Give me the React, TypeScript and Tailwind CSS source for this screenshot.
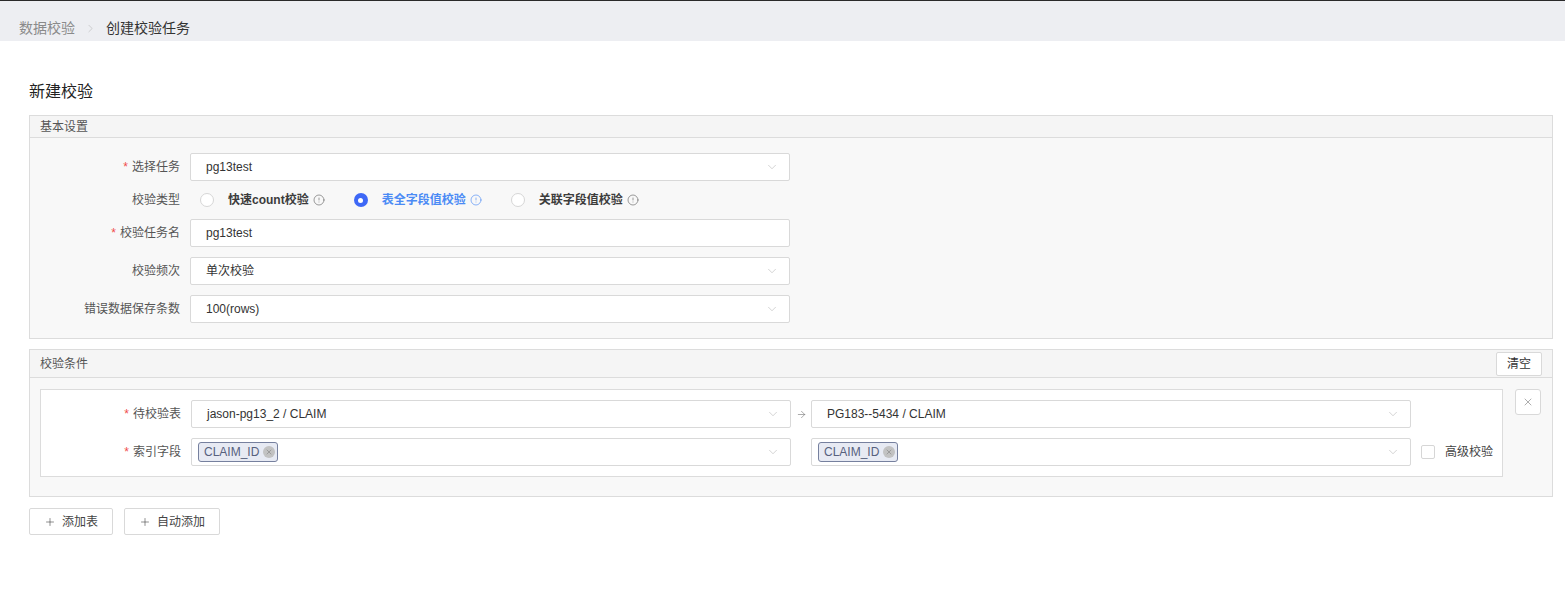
import { ChevronDown, ChevronRight, CircleAlert, Plus, X, ArrowRight } from 'lucide-react';

const font = { fontFamily: '"Liberation Sans", "Noto Sans CJK SC", sans-serif' };

function Label({ text, required, width }: { text: string; required?: boolean; width: string }) {
  return (
    <div className={`${width} mr-[10px] shrink-0 text-right text-[12px] whitespace-nowrap text-[#555]`}>
      {required && <span className="mr-[4px] text-[#f04c4c]">*</span>}
      {text}
    </div>
  );
}

function Select({ value, arrow = true, children }: { value?: string; arrow?: boolean; children?: React.ReactNode }) {
  return (
    <div className="flex h-[28px] w-[600px] shrink-0 items-center rounded-[2px] border border-[#d9d9d9] bg-white pr-[10px] pl-[15px] text-[12px] text-[#333]">
      <div className="flex flex-1 items-center">{children ?? value}</div>
      {arrow && <ChevronDown size={14} strokeWidth={1} className="text-[#b5b5b5]" />}
    </div>
  );
}

function Radio({ label, checked }: { label: string; checked?: boolean }) {
  return (
    <div className="mr-[29px] flex items-center">
      {checked ? (
        <span className="flex h-[14px] w-[14px] items-center justify-center rounded-full bg-[#3e68f6]">
          <span className="h-[5px] w-[5px] rounded-full bg-white" />
        </span>
      ) : (
        <span className="h-[14px] w-[14px] rounded-full border border-[#d6d6d6] bg-white" />
      )}
      <span className={`ml-[14px] text-[12px] font-semibold whitespace-nowrap ${checked ? 'text-[#4b8bf5]' : 'text-[#3c3c3c]'}`}>{label}</span>
      <CircleAlert size={12} strokeWidth={1.3} className={`ml-[4px] ${checked ? 'text-[#4b8bf5]' : 'text-[#666]'}`} />
    </div>
  );
}

function Tag() {
  return (
    <span className="-ml-[9px] flex h-[20px] items-center rounded-[3px] border border-[#76809e] bg-[#e7eaf3] pr-[2px] pl-[5px] text-[12px] text-[#56617e]">
      CLAIM_ID
      <span className="ml-[4px] flex h-[12px] w-[12px] items-center justify-center rounded-full bg-[#c2c2c2]">
        <X size={8} strokeWidth={2} className="text-[#888]" />
      </span>
    </span>
  );
}

export default function App() {
  return (
    <div className="min-h-[608px] w-full bg-white" style={font}>
      <div className="h-[41px] border-t border-[#2a2a2a] bg-[#edeef2] pt-[17px] pl-[19px]">
        <div className="flex items-center text-[14px] leading-[20px]">
          <span className="text-[#8a8a8a]">数据校验</span>
          <ChevronRight size={13} strokeWidth={1} className="mx-[9px] text-[#b0b0b0]" />
          <span className="text-[#333]">创建校验任务</span>
        </div>
      </div>

      <div className="pr-[12px] pb-[40px] pl-[29px]">
        <h1 className="mt-[39px] text-[16px] leading-[24px] text-[#222]">新建校验</h1>

        <section className="mt-[11px] border border-[#dcdcdc] bg-[#f8f8f8]">
          <div className="flex h-[22px] items-center border-b border-[#dcdcdc] bg-[#f5f5f5] pl-[10px] text-[12px] text-[#555]">
            基本设置
          </div>
          <div className="flex flex-col gap-[10px] pt-[15px] pb-[15px]">
            <div className="flex items-center">
              <Label width="w-[150px]" text="选择任务" required />
              <Select value="pg13test" />
            </div>
            <div className="flex h-[18px] items-center">
              <Label width="w-[150px]" text="校验类型" />
              <div className="ml-[10px] flex items-center">
                <Radio label="快速count校验" />
                <Radio label="表全字段值校验" checked />
                <Radio label="关联字段值校验" />
              </div>
            </div>
            <div className="flex items-center">
              <Label width="w-[150px]" text="校验任务名" required />
              <Select value="pg13test" arrow={false} />
            </div>
            <div className="flex items-center">
              <Label width="w-[150px]" text="校验频次" />
              <Select value="单次校验" />
            </div>
            <div className="flex items-center">
              <Label width="w-[150px]" text="错误数据保存条数" />
              <Select value="100(rows)" />
            </div>
          </div>
        </section>

        <section className="mt-[10px] border border-[#dcdcdc] bg-[#f8f8f8]">
          <div className="flex h-[28px] items-center justify-between border-b border-[#dcdcdc] bg-[#f5f5f5] pr-[10px] pl-[10px] text-[12px] text-[#555]">
            <span>校验条件</span>
            <button className="h-[24px] w-[46px] rounded-[2px] border border-[#d9d9d9] bg-white text-[12px] text-[#333]">清空</button>
          </div>
          <div className="flex items-start gap-[12px] pt-[11px] pr-[11px] pb-[19px] pl-[10px]">
            <div className="flex flex-1 flex-col gap-[10px] border border-[#dcdcdc] bg-white py-[10px]">
              <div className="flex items-center">
                <Label width="w-[140px]" text="待校验表" required />
                <Select value="jason-pg13_2 / CLAIM" />
                <div className="flex w-[20px] shrink-0 justify-center">
                  <ArrowRight size={11} strokeWidth={1.2} className="text-[#666]" />
                </div>
                <Select value="PG183--5434 / CLAIM" />
              </div>
              <div className="flex items-center">
                <Label width="w-[140px]" text="索引字段" required />
                <Select>
                  <Tag />
                </Select>
                <div className="w-[20px] shrink-0" />
                <Select>
                  <Tag />
                </Select>
                <span className="ml-[10px] h-[14px] w-[14px] shrink-0 rounded-[2px] border border-[#d6d6d6] bg-white" />
                <span className="ml-[10px] text-[12px] whitespace-nowrap text-[#444]">高级校验</span>
              </div>
            </div>
            <button className="flex h-[26px] w-[26px] shrink-0 items-center justify-center rounded-[3px] border border-[#d9d9d9] bg-white">
              <X size={12} strokeWidth={1.2} className="text-[#777]" />
            </button>
          </div>
        </section>

        <div className="mt-[11px] flex gap-[11px]">
          <button className="flex h-[27px] w-[84px] items-center justify-center rounded-[2px] border border-[#d9d9d9] bg-white text-[12px] text-[#444]">
            <Plus size={12} strokeWidth={1.2} className="mr-[6px]" />
            添加表
          </button>
          <button className="flex h-[27px] w-[96px] items-center justify-center rounded-[2px] border border-[#d9d9d9] bg-white text-[12px] text-[#444]">
            <Plus size={12} strokeWidth={1.2} className="mr-[6px]" />
            自动添加
          </button>
        </div>
      </div>
    </div>
  );
}
